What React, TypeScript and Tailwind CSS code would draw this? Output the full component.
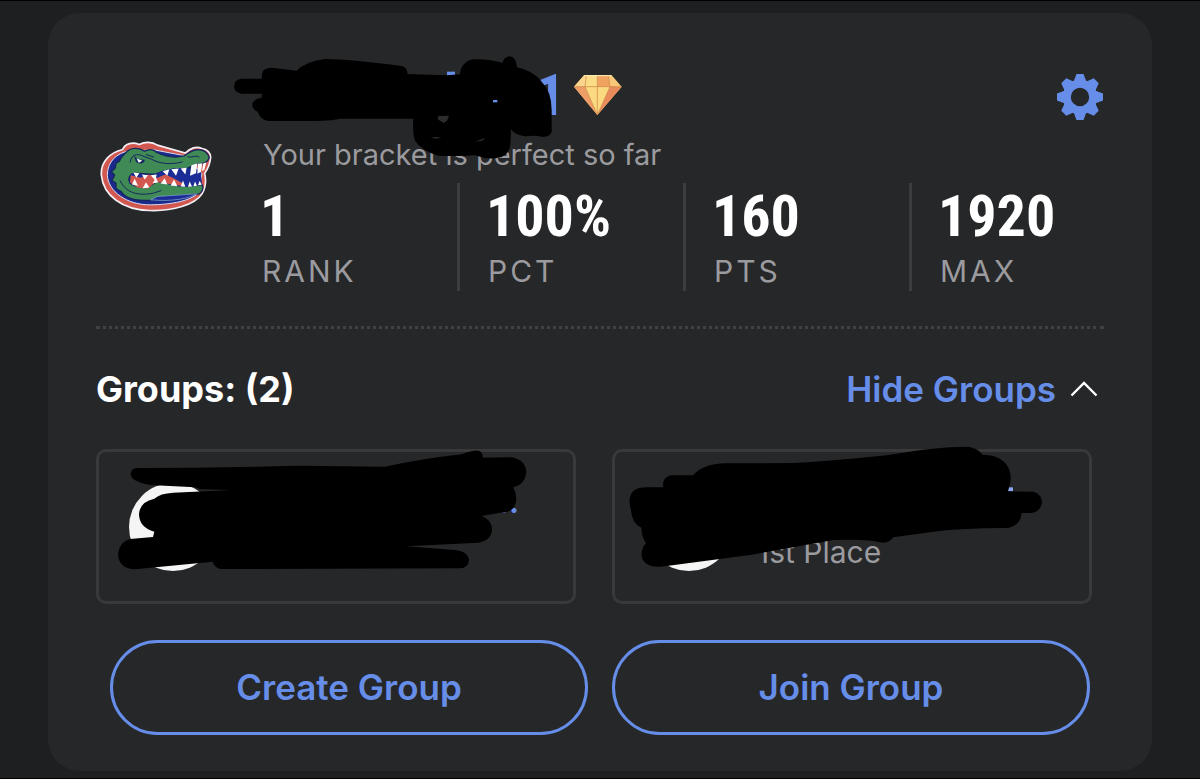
import { useState } from 'react';
import type { ReactNode } from 'react';

const STATS = [
  { label: 'RANK', value: '1' },
  { label: 'PCT', value: '100%' },
  { label: 'PTS', value: '160' },
  { label: 'MAX', value: '1920' },
];

const TEETH = [0, 45, 90, 135, 180, 225, 270, 315];

function GatorLogo() {
  return (
    <svg viewBox="44 32 336 212" className="h-[71px] w-[112px] shrink-0" role="img" aria-label="Florida Gators">
      <path
        d="M48 133C46 94 74 66 112 57C120 38 142 34 162 42C178 33 200 33 216 44L300 68C314 52 334 46 350 54C366 56 376 68 376 80C374 100 366 118 358 128C362 146 362 170 350 190C330 222 262 243 192 240C112 238 54 196 48 133Z"
        fill="#d2584f"
        stroke="#f3eef5"
        strokeWidth="5"
      />
      <path
        d="M128 62C96 68 66 92 66 134C68 182 124 224 196 223C262 222 316 210 338 188L350 130L300 76L205 58Z"
        fill="#1a2a8c"
        stroke="#d9dcf2"
        strokeWidth="3"
      />
      <path
        d="M122 66L110 78L102 92L92 98L90 112L78 124L88 134L80 150L92 158L92 174L108 184C122 206 162 214 206 208L222 200L342 190C352 184 356 172 350 162L318 166C292 170 268 166 244 158L214 152C190 176 158 174 134 158C126 146 132 132 146 128C170 128 190 134 212 130C236 120 268 112 300 116L334 100C352 102 366 98 372 82C368 66 354 56 338 58C322 56 310 68 296 76C266 84 240 78 214 66C204 54 188 56 178 62C162 50 136 50 122 66Z"
        fill="#3f8a55"
        stroke="#16265f"
        strokeWidth="4"
      />
      <path
        d="M136 130C158 126 186 138 210 132C238 116 270 112 304 114L312 132L346 124L350 162C310 172 276 168 244 160L210 152C188 176 156 174 138 158Z"
        fill="#1b2c96"
      />
      <path d="M136 134L166 142L190 132L216 142L240 132L262 142L292 158L288 166L246 160L212 154L188 174L158 172L134 156Z" fill="#d2584f" />
      <path
        d="M144 126L162 128L153 142ZM170 132L188 134L178 147ZM196 134L214 132L210 150ZM232 122L252 116L246 136ZM258 116L280 114L272 136ZM286 114L304 112L300 132ZM318 104L336 98L332 128L314 136ZM338 100L351 98L347 124L336 130ZM354 98L363 96L357 118L350 122ZM140 162L148 145L158 166ZM172 173L182 155L192 171ZM202 158L212 142L218 156ZM226 159L238 143L246 162ZM256 165L266 147L276 167ZM286 168L293 150L300 169ZM308 169L313 153L320 168ZM324 167L329 153L335 166ZM338 164L343 151L349 163Z"
        fill="#fff"
      />
      <path d="M146 76L158 86L178 88C180 98 162 104 152 94Z" fill="#16265f" />
      <path d="M154 84L171 91L160 97Z" fill="#fff" />
      <path
        d="M134 96C138 74 152 66 176 78L198 86C226 102 262 102 292 94M104 150C124 190 160 196 204 188L228 180M306 78C316 84 330 72 342 80M182 72L206 80"
        fill="none"
        stroke="#16265f"
        strokeWidth="3"
      />
      <path d="M196 208L216 198L334 190C310 204 262 214 196 208Z" fill="#1b2c96" stroke="#8db5d6" strokeWidth="2" />
    </svg>
  );
}

function Diamond() {
  return (
    <svg viewBox="1044 72 150 126" className="h-[42px] w-[50px] shrink-0" aria-hidden="true">
      <path d="M1077 76H1160L1190 110L1117 195L1047 110Z" fill="#f8c878" />
      <path d="M1077 76L1047 110H1080L1090 88Z" fill="#fbd58c" />
      <path d="M1047 110H1080L1117 195Z" fill="#ee9d66" />
      <path d="M1155 110H1190L1117 195Z" fill="#e98b5b" />
      <path d="M1117 76H1150L1155 110H1117Z" fill="#f0a35f" />
      <path d="M1084 76H1117V110H1080Z" fill="#fbdc86" />
      <path d="M1080 110H1155L1117 195Z" fill="#fbd980" />
      <path d="M1117 76V195M1047 110H1190M1084 76L1080 110L1117 195L1155 110L1150 76" fill="none" stroke="#c98245" strokeWidth="2" />
      <path d="M1077 77H1160" stroke="#fff0b8" strokeWidth="3" />
    </svg>
  );
}

function Gear() {
  return (
    <svg viewBox="-24 -24 48 48" className="size-12" aria-hidden="true">
      <circle r="13.2" fill="none" stroke="#668ee9" strokeWidth="8" />
      {TEETH.map((deg) => (
        <path key={deg} d="M-6.5 -15L-3.5 -23H3.5L6.5 -15Z" fill="#668ee9" transform={`rotate(${deg})`} />
      ))}
    </svg>
  );
}

function NameScribble() {
  return (
    <svg viewBox="0 0 1230 375" className="pointer-events-none absolute top-[37px] left-[177px] h-[125px] w-[410px]" aria-hidden="true">
      <path d="M666 65H690V80H666Z" fill="#668ee9" />
      <path d="M50 86H110L111 72Q114 53 140 53L215 62Q240 35 300 27Q360 26 530 48Q547 53 548 72L665 76L705 73Q708 35 745 28Q790 27 832 38Q838 20 855 19Q873 22 876 52Q925 62 950 95Q980 125 980 180V245Q975 262 950 260Q930 255 900 259Q870 255 858 238L856 285Q850 322 812 325Q780 328 750 316Q700 320 640 317Q590 302 570 272Q562 250 565 206H345Q320 213 240 213H130Q105 208 98 185Q80 177 82 160Q90 145 110 143V131H50Q27 128 27 108Q28 88 50 86Z" />
      <path d="M640 198L672 197L666 212L656 219L638 208ZM616 261L650 262L634 266ZM750 275L782 263L772 272Z" fill="#2b2c2e" />
      <path d="M804 150H817V157H804Z" fill="#668ee9" />
    </svg>
  );
}

function GroupOneScribble() {
  return (
    <svg viewBox="0 0 1500 510" className="pointer-events-none absolute -top-3 -left-[14px] h-[170px] w-[500px]" aria-hidden="true">
      <path d="M155 84Q400 84 640 77L900 80Q1020 55 1130 43Q1165 30 1180 32Q1195 36 1193 53L1280 52Q1322 60 1324 97Q1320 135 1285 142Q1296 165 1293 185Q1285 220 1245 218L1190 228Q1222 240 1221 270Q1218 302 1180 308L965 319L1110 330Q1150 335 1152 360Q1150 385 1125 385L410 387Q390 386 383 365L150 388Q103 386 99 345Q102 305 135 297L204 291L208 275Q162 262 162 222Q165 185 208 176Q225 160 265 158L440 150L345 148L330 142L195 135Q138 125 137 103Q138 85 155 84Z" />
    </svg>
  );
}

function GroupTwoScribble() {
  return (
    <svg viewBox="0 0 1500 510" className="pointer-events-none absolute -top-3 -left-[15px] h-[170px] w-[500px]" aria-hidden="true">
      <path d="M1222 142H1239V154H1222Z" fill="#8ba8ee" />
      <path d="M190 142Q185 112 213 106H280Q305 74 370 70L580 69Q700 63 860 46Q1000 20 1105 20Q1135 25 1147 44Q1200 45 1220 75Q1242 105 1224 154L1300 155Q1325 162 1326 188Q1322 215 1295 219H1265Q1262 255 1225 264Q1100 263 1000 275L880 292Q865 312 840 307Q810 297 700 300Q600 318 450 345L200 378Q135 388 125 350Q123 325 138 310Q125 290 124 263Q95 250 93 210Q82 175 98 155Q110 142 140 142Z" />
    </svg>
  );
}

function GroupCard({ name, place, children }: { name?: string; place?: string; children: ReactNode }) {
  return (
    <li className="relative flex h-[155px] items-center gap-6 rounded-[10px] border-[3px] border-[#39393c] px-[30px]">
      <span className="size-[88px] shrink-0 rounded-full bg-[#f5f5f5]" />
      <div className="w-[278px] text-[30px] leading-[50px]">
        <p className="text-right font-bold text-[#668ee9] h-[50px]">{name}</p>
        <p className="h-[50px] text-[#9b9b9f]">{place}</p>
      </div>
      {children}
    </li>
  );
}

export default function App() {
  const [open, setOpen] = useState(true);

  return (
    <main className="border-y border-black bg-[#1e1f21] px-12 pt-3 pb-[7px] font-['Inter','Noto_Sans',sans-serif]">
      <section className="relative rounded-[32px] bg-[#262729] px-12 pt-12 pb-9">
        <div className="flex items-start">
          <div className="w-[167px] shrink-0 pt-20 pl-1">
            <GatorLogo />
          </div>
          <div className="min-w-0 flex-1">
            <div className="flex h-16 items-center justify-between">
              <div className="flex items-center gap-2 pt-1 pl-[272px]">
                <h1 className="w-[30px] text-right font-['Liberation_Sans_Narrow','Roboto_Condensed',Roboto,sans-serif] text-[58px] leading-[64px] font-bold text-[#668ee9]">
                  1
                </h1>
                <Diamond />
              </div>
              <button type="button" aria-label="Settings" className="cursor-pointer pt-2">
                <Gear />
              </button>
            </div>
            <p className="mt-[10px] text-[29px] leading-10 text-[#9b9b9f]">Your bracket is perfect so far</p>
            <dl className="mt-2 -mr-[31px] -ml-8 grid grid-cols-4">
              {STATS.map((s) => (
                <div
                  key={s.label}
                  className="flex h-[108px] flex-col-reverse justify-end border-l-[3px] border-[#3d3d40] pl-[26px] first:border-transparent"
                >
                  <dt className="mt-0.5 pl-0.5 text-[30px] leading-10 tracking-widest text-[#9b9b9f]">{s.label}</dt>
                  <dd className="font-['Liberation_Sans_Narrow','Roboto_Condensed',Roboto,sans-serif] text-[58px] leading-[66px] font-bold text-white">
                    {s.value}
                  </dd>
                </div>
              ))}
            </dl>
          </div>
        </div>
        <NameScribble />

        <div className="mt-[35px] border-t-[3px] border-dotted border-[#414144]" />

        <div className="mt-10 flex h-10 items-center justify-between pr-1.5">
          <h2 className="text-[36px] leading-10 font-bold text-white">Groups: (2)</h2>
          <button
            type="button"
            aria-expanded={open}
            onClick={() => setOpen(!open)}
            className="flex cursor-pointer items-center gap-[14px] text-[35px] leading-10 font-semibold text-[#668ee9]"
          >
            {open ? 'Hide Groups' : 'Show Groups'}
            <svg viewBox="0 0 28 18" className={`h-[18px] w-7 ${open ? '' : 'rotate-180'}`} aria-hidden="true">
              <path d="M1.5 15.5L14 3L26.5 15.5" fill="none" stroke="#fff" strokeWidth="2.4" />
            </svg>
          </button>
        </div>

        {open && (
          <ul className="mt-10 grid grid-cols-2 gap-9 pr-3">
            <GroupCard name="...">
              <GroupOneScribble />
            </GroupCard>
            <GroupCard place="1st Place">
              <GroupTwoScribble />
            </GroupCard>
          </ul>
        )}

        <div className="mt-9 grid grid-cols-2 gap-6 px-[14px] text-[35px] font-semibold text-[#668ee9]">
          <button type="button" className="h-[95px] cursor-pointer rounded-full border-[3px] border-[#668ee9]">
            Create Group
          </button>
          <button type="button" className="h-[95px] cursor-pointer rounded-full border-[3px] border-[#668ee9]">
            Join Group
          </button>
        </div>
      </section>
    </main>
  );
}
